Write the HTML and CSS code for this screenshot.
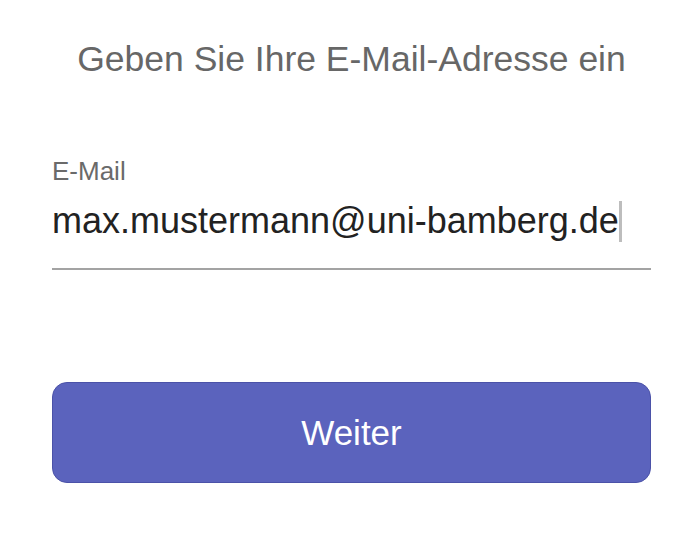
FILE: index.html
```html
<!DOCTYPE html>
<html lang="de">

<head>
    <meta charset="UTF-8">
    <meta name="viewport" content="width=device-width, initial-scale=1.0">
    <title>Anmelden</title>
    <link rel="stylesheet" href="styles.css">
</head>

<body>
    <div class="login">
        <h1 class="title">Geben Sie Ihre E-Mail-Adresse ein</h1>

        <div class="field">
            <label class="field-label" for="email">E-Mail</label>
            <div class="field-input">
                <span class="field-value">max.mustermann@uni-bamberg.de</span><span class="caret"></span>
            </div>
        </div>

        <button class="next-btn">Weiter</button>
    </div>
</body>

</html>
```

FILE: styles.css
```css
* {
    margin: 0;
    padding: 0;
    box-sizing: border-box;
}

html, body {
    height: 100%;
    overflow: hidden;
    background: #fff;
    font-family: "Liberation Sans", Arial, sans-serif;
}

.login {
    display: flex;
    flex-direction: column;
    padding: 37px 49px 0 52px;
}

.title {
    font-size: 35.5px;
    font-weight: normal;
    color: #676767;
    text-align: center;
    line-height: 44px;
}

.field {
    display: flex;
    flex-direction: column;
    margin-top: 75px;
}

.field-label {
    font-size: 26px;
    color: #6a6a6a;
    line-height: 30px;
}

.field-input {
    display: flex;
    align-items: center;
    height: 84px;
    padding-top: 13px;
    padding-bottom: 25px;
    border-bottom: 2px solid #a3a3a3;
}

.field-value {
    font-size: 36px;
    line-height: 44px;
    color: #222;
}

.caret {
    width: 3px;
    height: 41px;
    background: #bdbdbd;
    margin-left: 0;
}

.next-btn {
    margin-top: 112px;
    height: 101px;
    border: 1px solid #4b52a8;
    border-radius: 15px;
    background: #5b63bd;
    color: #fff;
    font-family: inherit;
    font-size: 35px;
}
```
